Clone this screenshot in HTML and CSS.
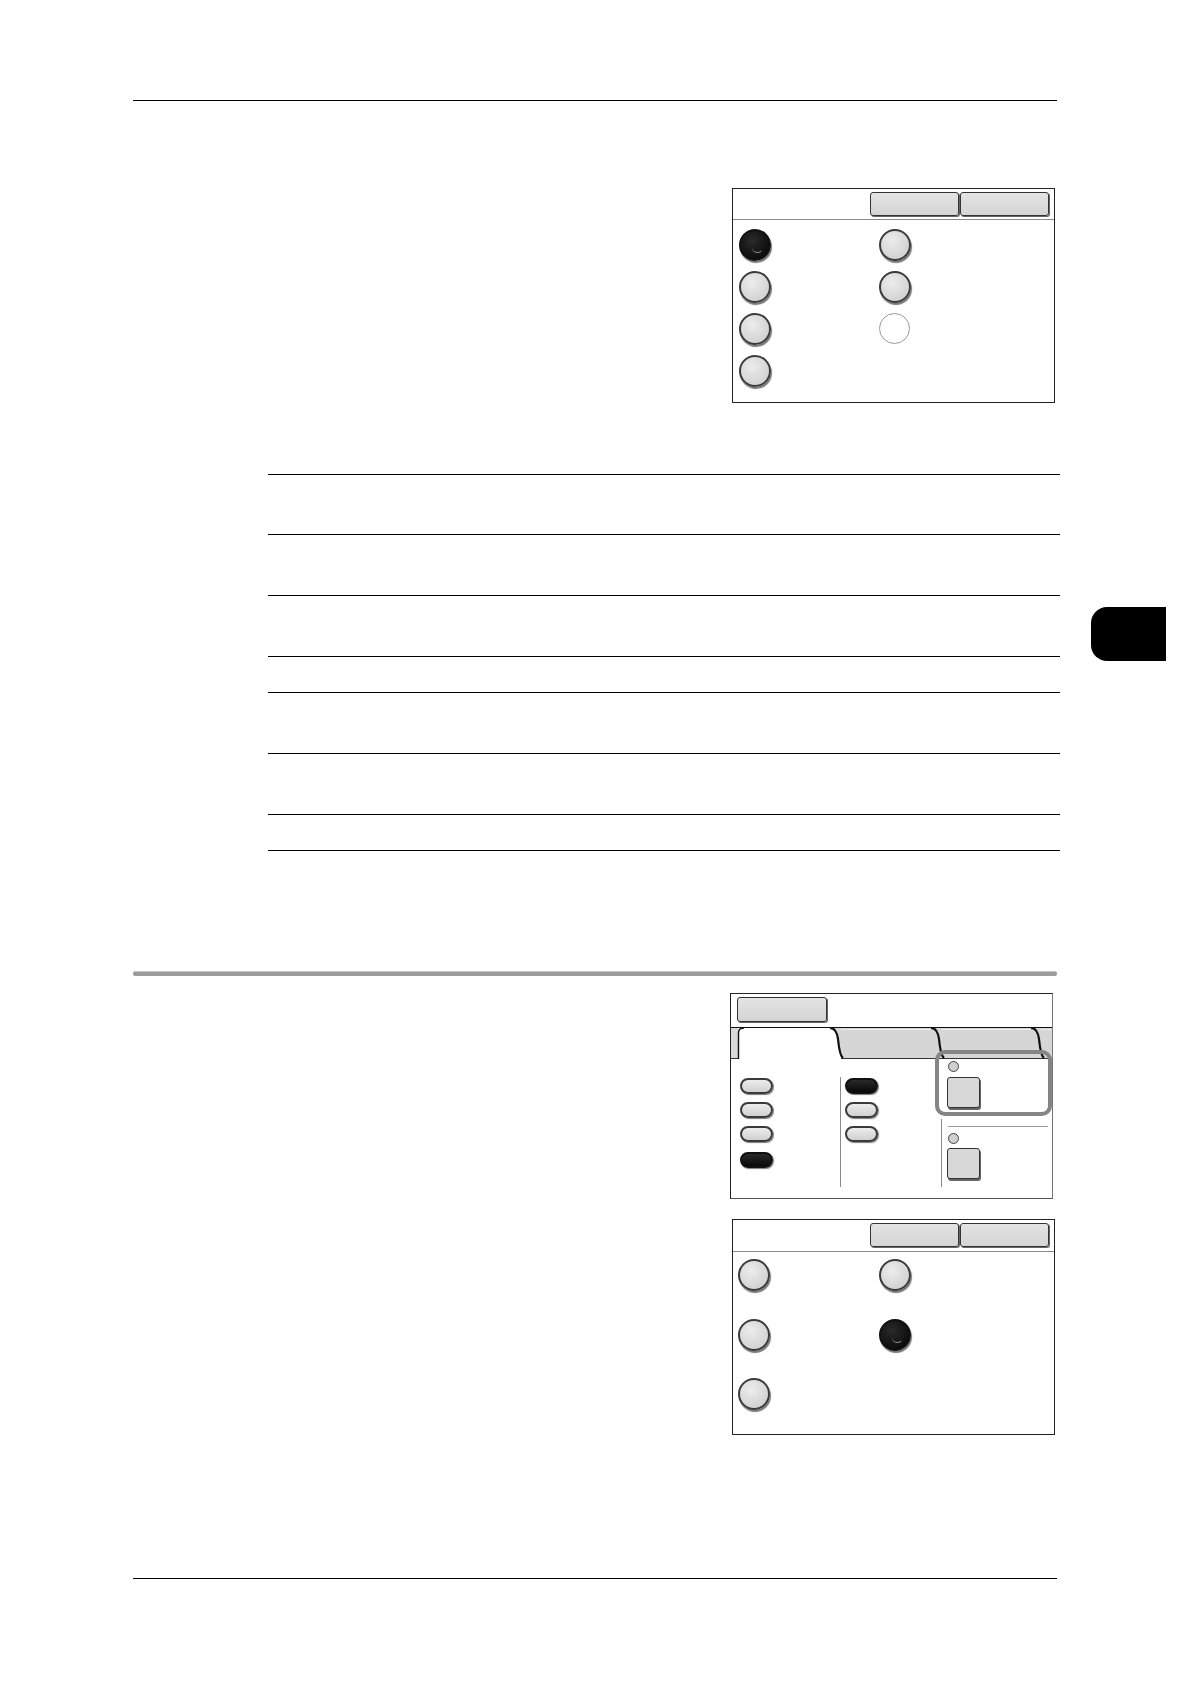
FILE: index.html
```
<!DOCTYPE html>
<html lang="en">
<head>
<meta charset="utf-8">
<title>Page</title>
<link rel="stylesheet" href="styles.css">
</head>
<body>
<div class="page">
  <div class="rule-top"></div>

  <div class="shot shot1">
    <div class="shot-head">
      <div class="hbtn"></div>
      <div class="hbtn"></div>
    </div>
    <div class="shot1-body">
      <div class="rcol rcol-a">
        <div class="radio on"></div>
        <div class="radio"></div>
        <div class="radio"></div>
        <div class="radio"></div>
      </div>
      <div class="rcol">
        <div class="radio"></div>
        <div class="radio"></div>
        <div class="radio off"></div>
      </div>
    </div>
  </div>

  <div class="tbl-wrap">
    <div class="tbl">
      <div class="row r60"></div>
      <div class="row r61"></div>
      <div class="row r61"></div>
      <div class="row r36"></div>
      <div class="row r61"></div>
      <div class="row r61"></div>
      <div class="row r36 last"></div>
    </div>
    <div class="thumb"></div>
  </div>

  <div class="rule-gray"></div>

  <div class="shot shot2">
    <div class="shot2-head">
      <div class="hbtn wide"></div>
    </div>
    <svg class="tabs" width="321" height="32" viewBox="0 0 321 32">
      <rect x="0" y="1" width="7.5" height="30" fill="#d9d9d9"/>
      <path d="M99,1 C104,1 106,5 107,12 C108,22 109,29 112,31 L321,31 L321,1 Z" fill="#d6d6d6"/>
      <path d="M0,0.5 H321" stroke="#111" stroke-width="1.2" fill="none"/>
      <path d="M0,31.5 H7.5" stroke="#333" stroke-width="1" fill="none"/>
      <path d="M7.5,32 V6 Q7.5,1 13,1" stroke="#111" stroke-width="1.4" fill="none"/>
      <path d="M110,31.5 H321" stroke="#333" stroke-width="1" fill="none"/>
      <path d="M110,2.5 H199 M210,2.5 H299 M310,2.5 H320" stroke="#eeeeee" stroke-width="1" fill="none"/>
      <path d="M99,1 C104,1 106,5 107,12 C108,22 109,29 112,31" stroke="#111" stroke-width="2.2" fill="none"/>
      <path d="M200,1 C205,1 207,5 208,12 C209,22 210,29 213,31" stroke="#111" stroke-width="2.2" fill="none"/>
      <path d="M300,1 C305,1 307,5 308,12 C309,22 310,29 313,31" stroke="#111" stroke-width="2.2" fill="none"/>
    </svg>
    <div class="shot2-body">
      <div class="pcol1">
        <div class="pill"></div>
        <div class="pill"></div>
        <div class="pill"></div>
        <div class="pill on gap"></div>
      </div>
      <div class="pcol2">
        <div class="sep">
          <div class="pill on"></div>
          <div class="pill"></div>
          <div class="pill"></div>
        </div>
      </div>
      <div class="pcol3">
        <div class="grp1">
          <div class="dot"></div>
          <div class="sq"></div>
        </div>
        <div class="grp2">
          <div class="hl"></div>
          <div class="dot d2"></div>
          <div class="sq s2"></div>
        </div>
      </div>
    </div>
    <div class="focus"></div>
  </div>

  <div class="shot shot3">
    <div class="shot-head">
      <div class="hbtn"></div>
      <div class="hbtn"></div>
    </div>
    <div class="shot3-body">
      <div class="rcol3 rcol-a">
        <div class="radio"></div>
        <div class="radio"></div>
        <div class="radio"></div>
      </div>
      <div class="rcol3">
        <div class="radio"></div>
        <div class="radio on"></div>
      </div>
    </div>
  </div>

  <div class="rule-bottom"></div>
</div>
</body>
</html>
```

FILE: styles.css
```
* { box-sizing: border-box; }

html, body {
  margin: 0;
  padding: 0;
  background: #ffffff;
  font-family: "Liberation Sans", Arial, sans-serif;
}

.page {
  width: 1190px;
  min-height: 1684px;
  padding-top: 100px;
  overflow: hidden;
}

.rule-top {
  margin-left: 133px;
  width: 924px;
  border-top: 1px solid #000;
}

.shot {
  width: 323px;
  border: 1px solid #222;
  background: #fff;
}

.shot1 {
  margin: 87px 0 0 732px;
  height: 215px;
}

.shot-head {
  height: 31px;
  border-bottom: 1px solid #8a8a8a;
  display: flex;
  justify-content: flex-end;
  gap: 1px;
  padding: 3px 5px 0 0;
}

.hbtn {
  width: 89px;
  height: 24px;
  background: linear-gradient(#e4e4e4, #d4d4d4);
  border: 1px solid #333;
  border-radius: 3px;
  box-shadow: 1px 1px 0 #666;
}

.hbtn.wide {
  width: 90px;
  height: 25px;
}

.shot1-body {
  display: flex;
  padding: 9px 0 0 6px;
}

.rcol {
  display: flex;
  flex-direction: column;
  gap: 10px;
}

.rcol-a { width: 140px; }

.radio {
  position: relative;
  width: 32px;
  height: 32px;
  border-radius: 50%;
  background: radial-gradient(circle at 40% 35%, #ececec, #d2d2d2 75%);
  border: 2px solid #3a3a3a;
  box-shadow: 1px 2px 1px #777;
}

.radio.on {
  background: radial-gradient(circle at 40% 35%, #2a2a2a, #0c0c0c 75%);
  border-color: #111;
}

.radio.on::after {
  content: "";
  position: absolute;
  right: 6px;
  bottom: 6px;
  width: 10px;
  height: 10px;
  border-radius: 50%;
  border-bottom: 1.5px solid #888;
  border-right: 1px solid transparent;
}

.radio.off {
  background: #fff;
  border: 1px solid #9a9a9a;
  box-shadow: none;
  width: 31px;
  height: 31px;
}

/* table */
.tbl-wrap {
  display: flex;
  align-items: flex-start;
  margin-top: 71px;
}

.tbl {
  margin-left: 268px;
  width: 792px;
}

.row { border-top: 1px solid #000; }
.row.last { border-bottom: 1px solid #000; }
.r60 { height: 60px; }
.r61 { height: 61px; }
.r36 { height: 36px; }
.r36.last { height: 37px; }

.thumb {
  margin: 133px 0 0 31px;
  width: 75px;
  height: 54px;
  background: #000;
  border-radius: 16px 0 0 16px;
}

.rule-gray {
  margin: 120px 0 0 133px;
  width: 924px;
  height: 5px;
  background: #9c9c9c;
  border-top: 1px solid #c4c4c4;
  border-radius: 2px;
}

/* second screenshot */
.shot2 {
  position: relative;
  margin: 17px 0 0 730px;
  height: 206px;
  border-right-color: #777;
  border-bottom-color: #555;
}

.shot2-head {
  height: 33px;
  padding: 3px 0 0 6px;
}

.tabs { display: block; }

.shot2-body {
  display: grid;
  grid-template-columns: 109px 101px 1fr;
}

.pcol1 {
  display: flex;
  flex-direction: column;
  gap: 8px;
  padding: 19px 0 0 9px;
}

.pill {
  width: 33px;
  height: 16px;
  border-radius: 8px;
  background: linear-gradient(#ececec, #d0d0d0);
  border: 2px solid #3a3a3a;
  box-shadow: 1px 1px 1px #7a7a7a;
}

.pill.on {
  background: linear-gradient(#2a2a2a, #080808);
  border-color: #111;
}

.pill.gap { margin-top: 2px; }

.sep {
  margin-top: 18px;
  height: 110px;
  border-left: 1px solid #8a8a8a;
  padding: 1px 0 0 4px;
  display: flex;
  flex-direction: column;
  gap: 8px;
}

.grp1 {
  display: flow-root;
  padding-left: 6px;
}

.dot {
  width: 11px;
  height: 11px;
  margin: 2px 0 0 1px;
  border-radius: 50%;
  background: #cfcfcf;
  border: 1px solid #444;
}

.sq {
  margin-top: 5px;
  width: 33px;
  height: 31px;
  border-radius: 3px;
  background: #d8d8d8;
  border: 1.5px solid #333;
  box-shadow: 1px 2px 0 #666;
}

.grp2 {
  display: flow-root;
  margin-top: 11px;
  height: 68px;
  border-left: 1px solid #8a8a8a;
  padding: 7px 0 0 5px;
}

.hl {
  margin-left: 1px;
  width: 100px;
  border-top: 1px solid #9a9a9a;
}

.dot.d2 { margin-top: 6px; }
.sq.s2 { margin-top: 4px; }

.focus {
  position: absolute;
  left: 204px;
  top: 56px;
  width: 117px;
  height: 66px;
  border: 4px solid #858585;
  border-radius: 10px;
}

/* third screenshot */
.shot3 {
  margin: 20px 0 0 732px;
  height: 216px;
}

.shot3 .shot-head {
  height: 32px;
}

.shot3-body {
  display: flex;
  padding: 7px 0 0 5px;
}

.rcol3 {
  display: flex;
  flex-direction: column;
  gap: 27.5px;
}

.rcol3.rcol-a { width: 141px; }

.rule-bottom {
  margin: 143px 0 0 133px;
  width: 924px;
  border-top: 1px solid #000;
}
```
